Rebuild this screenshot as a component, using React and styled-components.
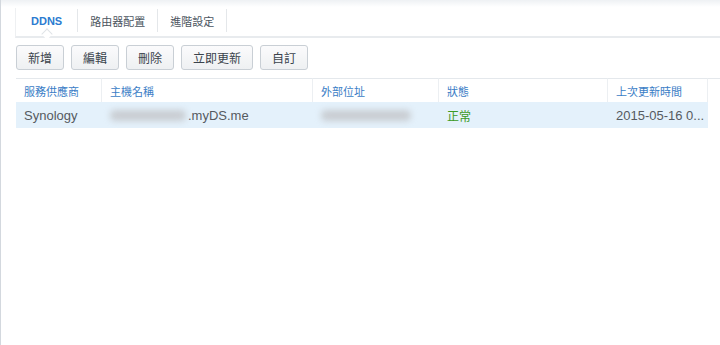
// IMPORTS
import React from "react";
import styled, { createGlobalStyle } from "styled-components";

const CJK = `"Liberation Sans", "Noto Sans CJK TC", sans-serif`;

const GlobalStyle = createGlobalStyle`
    html, body {
        margin: 0;
        padding: 0;
        background: #ffffff;
        font-family: ${CJK};
    }
`;

// Styled Components
const Styled_Window = styled.div`
    display: flex;
    flex-direction: column;
    height: 345px;
    box-sizing: border-box;
    border-left: 1px solid #d3d8de;
    background: linear-gradient(to bottom, #eef1f4 0px, #ffffff 7px);
    padding: 8px 0 0 14px;
`;

const Styled_TabBar = styled.div`
    display: flex;
    align-items: flex-start;
    height: 28px;
    border-left: 1px solid #eef0f2;
    border-bottom: 2px solid #e8ebee;
`;

const Styled_Tab = styled.div`
    position: relative;
    display: flex;
    align-items: center;
    height: 23px;
    margin-top: 1px;
    padding: 0 ${p => (p.$active ? 15 : 12)}px;
    border-right: 1px solid #e4e7ea;
    font-size: 11px;
    font-weight: ${p => (p.$active ? 700 : 400)};
    color: ${p => (p.$active ? "#2b7bd0" : "#4b5560")};

    ${p => p.$active && `
        &::after {
            content: "";
            position: absolute;
            left: 50%;
            bottom: -6px;
            width: 7px;
            height: 7px;
            margin-left: -4px;
            background: #ffffff;
            border-left: 1px solid #dfe3e7;
            border-top: 1px solid #dfe3e7;
            transform: rotate(45deg);
        }
    `}
`;

const Styled_Toolbar = styled.div`
    display: flex;
    gap: 7px;
    margin: 7px 0 0 1px;
`;

const Styled_Button = styled.button`
    height: 25px;
    padding: 0 11px;
    box-sizing: border-box;
    border: 1px solid #c9cfd5;
    border-radius: 3px;
    background: linear-gradient(to bottom, #fbfbfc, #eef0f2);
    font-family: ${CJK};
    font-size: 12px;
    color: #3a434c;
    cursor: pointer;
`;

const Styled_Table = styled.div`
    margin: 8px 0 0 1px;
    display: grid;
    grid-template-columns: 86px 211px 126px 169px 100px 1fr;
`;

const Styled_HeadCell = styled.div`
    display: flex;
    align-items: center;
    height: 23px;
    padding-left: 8px;
    border-top: 1px solid #e4e8ec;
    border-right: ${p => (p.$last ? "none" : "1px solid #eceff2")};
    font-size: 11px;
    color: #3a7dc6;
`;

const Styled_Cell = styled.div`
    display: flex;
    align-items: center;
    height: 26px;
    padding-left: 8px;
    background: ${p => (p.$filler ? "transparent" : "#e4f1fb")};
    font-size: ${p => (p.$cjk ? 12 : 13)}px;
    color: ${p => p.$color || "#555a5f"};
    white-space: nowrap;
    overflow: hidden;
`;

const Styled_Blur = styled.span`
    display: inline-block;
    width: ${p => p.$w}px;
    height: 11px;
    margin-right: ${p => p.$gap || 0}px;
    border-radius: 5px;
    background: #c9cdd2;
    filter: blur(3px);
`;

const TABS = ["DDNS", "路由器配置", "進階設定"];
const BUTTONS = ["新增", "編輯", "刪除", "立即更新", "自訂"];
const COLUMNS = ["服務供應商", "主機名稱", "外部位址", "狀態", "上次更新時間", ""];

export default function App() {
    return (
        <>
            <GlobalStyle />
            <Styled_Window>
                <Styled_TabBar>
                    {TABS.map((t, i) => (
                        <Styled_Tab key={t} $active={i === 0}>{t}</Styled_Tab>
                    ))}
                </Styled_TabBar>

                <Styled_Toolbar>
                    {BUTTONS.map(b => (
                        <Styled_Button key={b}>{b}</Styled_Button>
                    ))}
                </Styled_Toolbar>

                <Styled_Table>
                    {COLUMNS.map((c, i) => (
                        <Styled_HeadCell key={i} $last={i === COLUMNS.length - 1}>{c}</Styled_HeadCell>
                    ))}

                    <Styled_Cell>Synology</Styled_Cell>
                    <Styled_Cell>
                        <Styled_Blur $w={76} $gap={2} />
                        .myDS.me
                    </Styled_Cell>
                    <Styled_Cell>
                        <Styled_Blur $w={90} />
                    </Styled_Cell>
                    <Styled_Cell $cjk $color="#3c9a24">正常</Styled_Cell>
                    <Styled_Cell>2015-05-16 0...</Styled_Cell>
                    <Styled_Cell $filler />
                </Styled_Table>
            </Styled_Window>
        </>
    );
}
